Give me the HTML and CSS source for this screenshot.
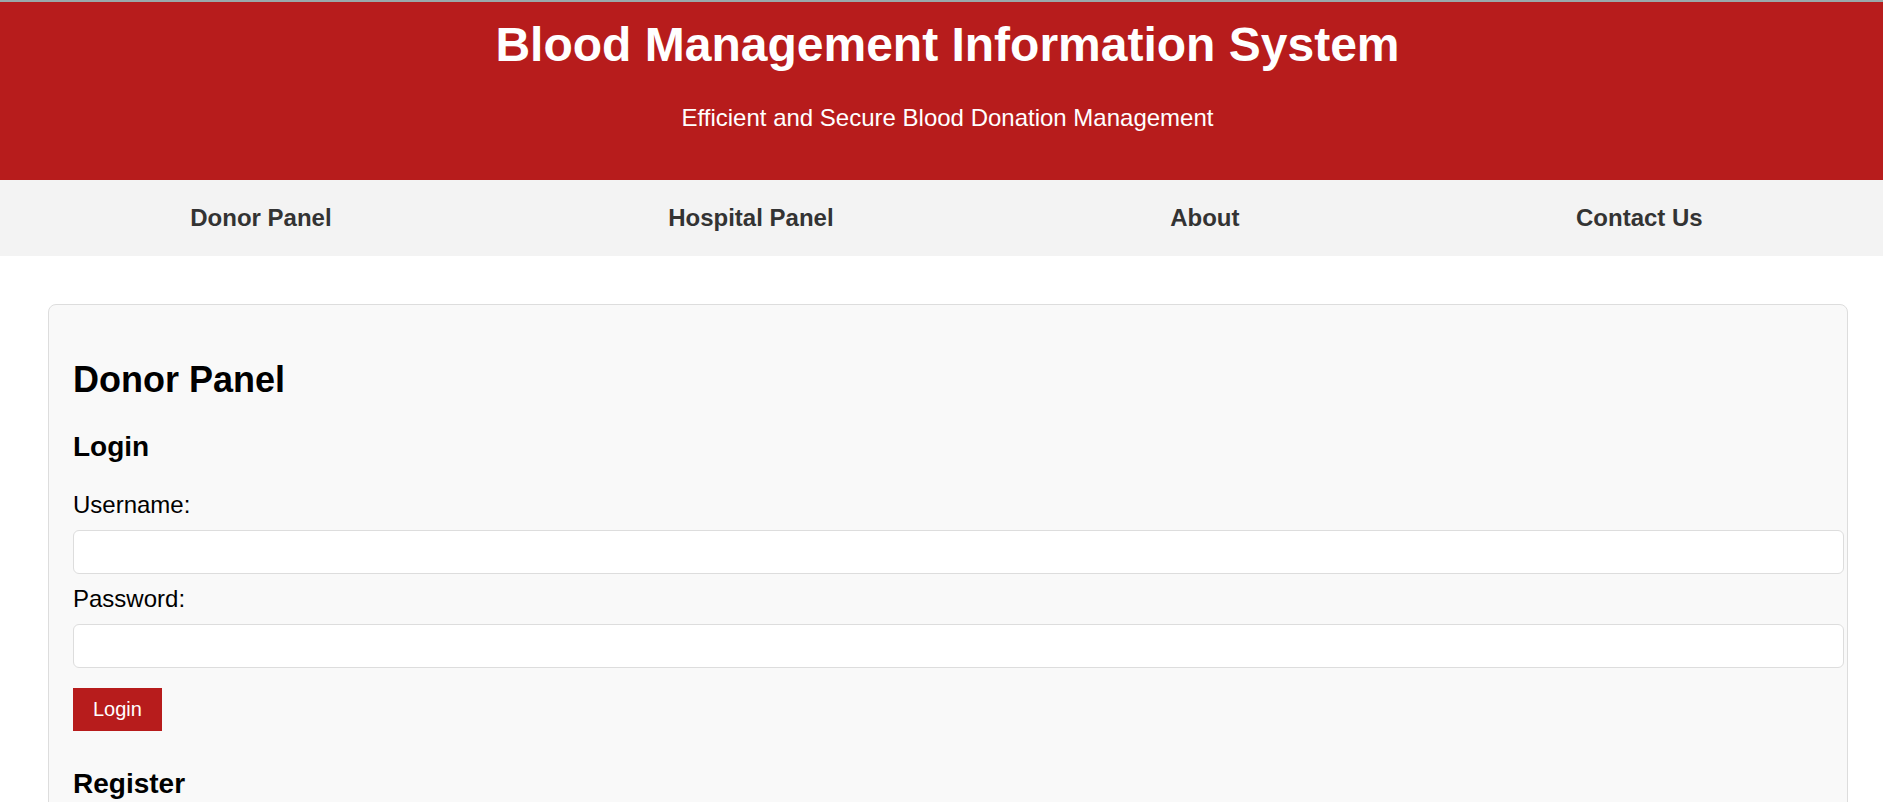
FILE: index.html
```html
<!DOCTYPE html>
<html lang="en">
<head>
<meta charset="utf-8">
<title>Blood Management Information System</title>
<link rel="stylesheet" href="styles.css">
</head>
<body>
<header class="site-header">
  <h1 class="site-title">Blood Management Information System</h1>
  <p class="site-tagline">Efficient and Secure Blood Donation Management</p>
</header>
<nav class="main-nav">
  <a class="nav-link" href="#donor">Donor Panel</a>
  <a class="nav-link" href="#hospital">Hospital Panel</a>
  <a class="nav-link" href="#about">About</a>
  <a class="nav-link" href="#contact">Contact Us</a>
</nav>
<main class="content">
  <section class="panel" id="donor">
    <h2 class="panel-title">Donor Panel</h2>
    <h3 class="panel-subtitle">Login</h3>
    <form class="panel-form login-form">
      <label class="field-label" for="login-username">Username:</label>
      <input class="field-input" type="text" id="login-username">
      <label class="field-label" for="login-password">Password:</label>
      <input class="field-input" type="password" id="login-password">
      <button class="btn" type="button">Login</button>
    </form>
    <h3 class="panel-subtitle">Register</h3>
    <form class="panel-form">
      <label class="field-label" for="reg-name">Full Name:</label>
      <input class="field-input" type="text" id="reg-name">
      <label class="field-label" for="reg-blood">Blood Group:</label>
      <input class="field-input" type="text" id="reg-blood">
      <label class="field-label" for="reg-contact">Contact:</label>
      <input class="field-input" type="text" id="reg-contact">
      <button class="btn" type="button">Register</button>
    </form>
  </section>
</main>
</body>
</html>
```

FILE: styles.css
```css
html, body {
  margin: 0;
  padding: 0;
}

body {
  font-family: "Liberation Sans", Arial, Helvetica, sans-serif;
  font-size: 24px;
  color: #000;
  background: #fff;
}

.site-header {
  border-top: 2px solid #9aa9aa;
  background: #b71c1c;
  color: #fff;
  text-align: center;
  padding: 15px 0 48px 12px;
}

.site-title {
  margin: 0 0 32px;
  font-size: 48px;
  font-weight: bold;
}

.site-tagline {
  margin: 0;
  font-size: 24px;
}

.main-nav {
  display: flex;
  justify-content: space-around;
  background: #f3f3f3;
  padding: 24px 12px 24px 22px;
}

.nav-link {
  color: #333;
  font-weight: bold;
  font-size: 24px;
  text-decoration: none;
}

.content {
  padding: 48px 35px 0 48px;
}

.panel {
  background: #f9f9f9;
  border: 1px solid #ddd;
  border-radius: 8px;
  padding: 24px;
}

.panel-title {
  font-size: 36px;
  margin: 30px 0;
}

.panel-subtitle {
  font-size: 28px;
  margin: 28px 0;
}

.login-form {
  margin-bottom: 37px;
}

.field-label {
  display: block;
}

.field-input {
  display: block;
  box-sizing: border-box;
  width: calc(100% + 21px);
  height: 44px;
  margin: 11px 0 10.5px;
  padding: 0 12px;
  border: 1px solid #ddd;
  border-radius: 6px;
  background: #fff;
  font-family: inherit;
  font-size: 20px;
}

.btn {
  display: block;
  margin-top: 20px;
  padding: 10px 20px;
  border: none;
  background: #b71c1c;
  color: #fff;
  font-family: inherit;
  font-size: 20px;
  line-height: 23px;
  cursor: pointer;
}
```
